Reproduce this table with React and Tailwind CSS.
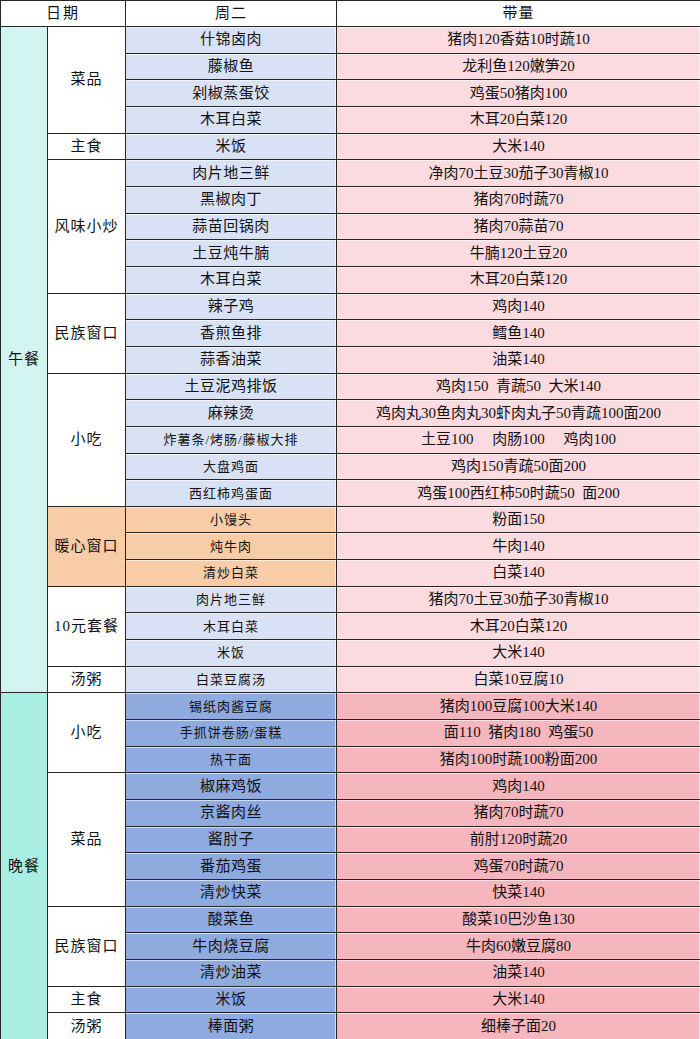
const lunch = [
  {
    name: "菜品",
    items: [
      ["什锦卤肉", "猪肉120香菇10时蔬10"],
      ["藤椒鱼", "龙利鱼120嫩笋20"],
      ["剁椒蒸蛋饺", "鸡蛋50猪肉100"],
      ["木耳白菜", "木耳20白菜120"],
    ],
  },
  { name: "主食", items: [["米饭", "大米140"]] },
  {
    name: "风味小炒",
    items: [
      ["肉片地三鲜", "净肉70土豆30茄子30青椒10"],
      ["黑椒肉丁", "猪肉70时蔬70"],
      ["蒜苗回锅肉", "猪肉70蒜苗70"],
      ["土豆炖牛腩", "牛腩120土豆20"],
      ["木耳白菜", "木耳20白菜120"],
    ],
  },
  {
    name: "民族窗口",
    items: [
      ["辣子鸡", "鸡肉140"],
      ["香煎鱼排", "鳕鱼140"],
      ["蒜香油菜", "油菜140"],
    ],
  },
  {
    name: "小吃",
    items: [
      ["土豆泥鸡排饭", "鸡肉150  青蔬50  大米140"],
      ["麻辣烫", "鸡肉丸30鱼肉丸30虾肉丸子50青疏100面200"],
      ["炸薯条/烤肠/藤椒大排", "土豆100　 肉肠100　 鸡肉100", true],
      ["大盘鸡面", "鸡肉150青疏50面200", true],
      ["西红柿鸡蛋面", "鸡蛋100西红柿50时蔬50  面200", true],
    ],
  },
  {
    name: "暖心窗口",
    warm: true,
    items: [
      ["小馒头", "粉面150", true],
      ["炖牛肉", "牛肉140", true],
      ["清炒白菜", "白菜140", true],
    ],
  },
  {
    name: "10元套餐",
    items: [
      ["肉片地三鲜", "猪肉70土豆30茄子30青椒10", true],
      ["木耳白菜", "木耳20白菜120", true],
      ["米饭", "大米140", true],
    ],
  },
  { name: "汤粥", items: [["白菜豆腐汤", "白菜10豆腐10", true]] },
];

const dinner = [
  {
    name: "小吃",
    items: [
      ["锡纸肉酱豆腐", "猪肉100豆腐100大米140", true],
      ["手抓饼卷肠/蛋糕", "面110  猪肉180  鸡蛋50", true],
      ["热干面", "猪肉100时蔬100粉面200", true],
    ],
  },
  {
    name: "菜品",
    items: [
      ["椒麻鸡饭", "鸡肉140"],
      ["京酱肉丝", "猪肉70时蔬70"],
      ["酱肘子", "前肘120时蔬20"],
      ["番茄鸡蛋", "鸡蛋70时蔬70"],
      ["清炒快菜", "快菜140"],
    ],
  },
  {
    name: "民族窗口",
    items: [
      ["酸菜鱼", "酸菜10巴沙鱼130"],
      ["牛肉烧豆腐", "牛肉60嫩豆腐80"],
      ["清炒油菜", "油菜140"],
    ],
  },
  { name: "主食", items: [["米饭", "大米140"]] },
  { name: "汤粥", items: [["棒面粥", "细棒子面20"]] },
];

// row-span classes written out so tailwind picks them up
const spans = {
  1: "row-span-1",
  3: "row-span-3",
  4: "row-span-4",
  5: "row-span-5",
  13: "row-span-13",
  25: "row-span-25",
};

const cell = "flex items-center justify-center whitespace-pre leading-none";
const shine = "shadow-[inset_-1px_1px_0_rgba(255,255,255,0.6)]";

const Meal = ({ title, groups, mealBg, dishBg, amountBg }) => {
  const total = groups.reduce((n, g) => n + g.items.length, 0);
  return (
    <>
      <div className={`${cell} ${spans[total]} ${mealBg} text-[15px] tracking-[1px]`}>
        {title}
      </div>
      {groups.map((g, gi) => (
        <Group key={gi} g={g} dishBg={dishBg} amountBg={amountBg} />
      ))}
    </>
  );
};

const Group = ({ g, dishBg, amountBg }) => (
  <>
    <div
      className={`${cell} ${spans[g.items.length]} ${
        g.warm ? "bg-[#f9cca8]" : "bg-white"
      } text-[15px] tracking-[1px]`}
    >
      {g.name}
    </div>
    {g.items.map(([dish, amount, small], i) => (
      <Row
        key={i}
        dish={dish}
        amount={amount}
        small={small}
        dishBg={g.warm ? "bg-[#f9cca8]" : dishBg}
        amountBg={amountBg}
      />
    ))}
  </>
);

const Row = ({ dish, amount, small, dishBg, amountBg }) => (
  <>
    <div
      className={`${cell} ${dishBg} ${shine} ${
        small ? "text-[13px] tracking-[1px]" : "text-[15px] tracking-[0.5px]"
      }`}
    >
      {dish}
    </div>
    <div className={`${cell} ${amountBg} ${shine} text-[15px]`}>{amount}</div>
  </>
);

export default function App() {
  return (
    <div className="w-[700px] h-[1039px] bg-white overflow-hidden">
      <div className="grid h-full grid-cols-[46px_77px_210px_1fr] grid-rows-[25px_repeat(38,minmax(0,1fr))] gap-px bg-[#262626] pl-px pt-px text-[#111] font-['Liberation_Serif','Noto_Sans_CJK_SC',serif]">
        <div className={`${cell} col-span-2 bg-white text-[15px] tracking-[2px]`}>日期</div>
        <div className={`${cell} bg-white text-[15px] tracking-[1px]`}>周二</div>
        <div className={`${cell} bg-white text-[15px] tracking-[1px]`}>带量</div>
        <Meal
          title="午餐"
          groups={lunch}
          mealBg="bg-[#d3f5f2]"
          dishBg="bg-[#d9e2f5]"
          amountBg="bg-[#fbdbe0]"
        />
        <Meal
          title="晚餐"
          groups={dinner}
          mealBg="bg-[#a9ede3]"
          dishBg="bg-[#8eaadf]"
          amountBg="bg-[#f5b6bd]"
        />
      </div>
    </div>
  );
}
